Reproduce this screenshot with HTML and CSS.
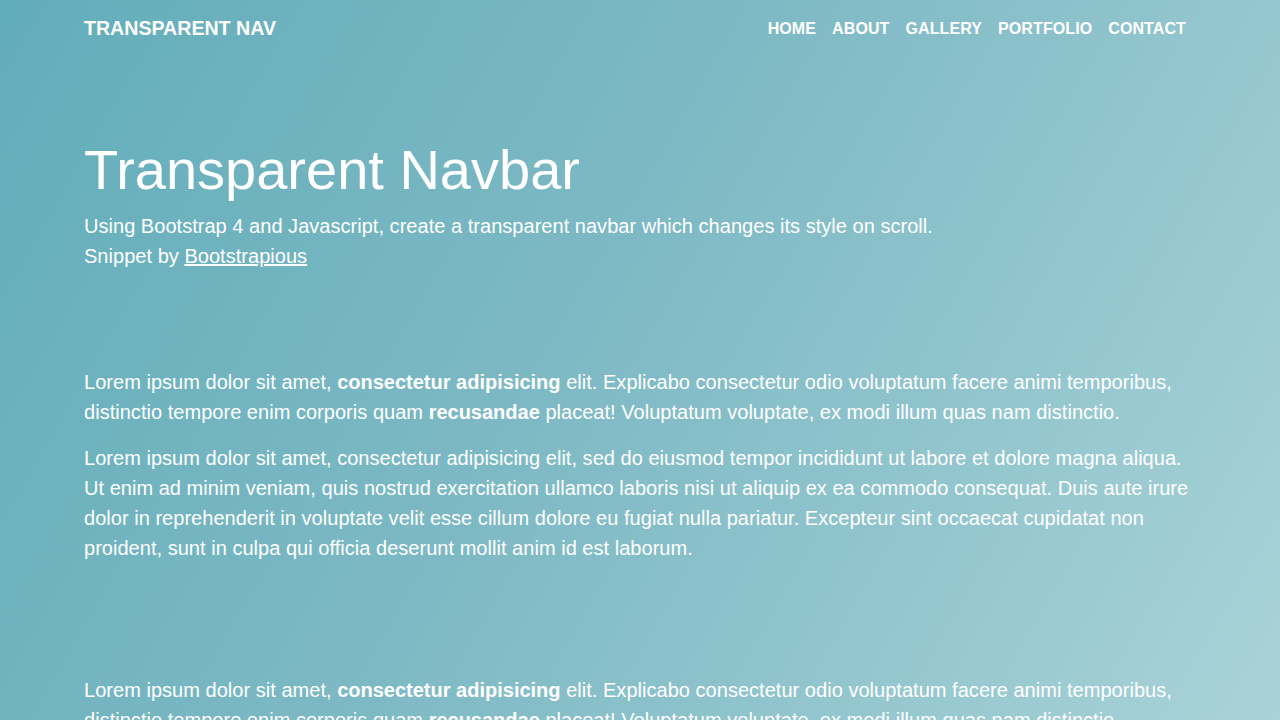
FILE: index.html
```html
<!DOCTYPE html>
<html lang="en">
<head>
<meta charset="utf-8">
<title>Transparent Navbar</title>
<link rel="stylesheet" href="styles.css">
</head>
<body>
<nav class="navbar">
  <div class="container nav-inner">
    <a class="brand" href="#">Transparent Nav</a>
    <ul class="nav-links">
      <li><a href="#">Home</a></li>
      <li><a href="#">About</a></li>
      <li><a href="#">Gallery</a></li>
      <li><a href="#">Portfolio</a></li>
      <li><a href="#">Contact</a></li>
    </ul>
  </div>
</nav>
<main class="container page">
  <header class="hero">
    <h1 class="display">Transparent Navbar</h1>
    <p class="lead">Using Bootstrap 4 and Javascript, create a transparent navbar which changes its style on scroll.</p>
    <p class="lead last">Snippet by <a class="ulink" href="#">Bootstrapious</a></p>
  </header>
  <section class="section">
    <p class="lead">Lorem ipsum dolor sit amet, <strong>consectetur adipisicing</strong> elit. Explicabo consectetur odio voluptatum facere animi temporibus, distinctio tempore enim corporis quam <strong>recusandae</strong> placeat! Voluptatum voluptate, ex modi illum quas nam distinctio.</p>
    <p class="lead">Lorem ipsum dolor sit amet, consectetur adipisicing elit, sed do eiusmod tempor incididunt ut labore et dolore magna aliqua. Ut enim ad minim veniam, quis nostrud exercitation ullamco laboris nisi ut aliquip ex ea commodo consequat. Duis aute irure dolor in reprehenderit in voluptate velit esse cillum dolore eu fugiat nulla pariatur. Excepteur sint occaecat cupidatat non proident, sunt in culpa qui officia deserunt mollit anim id est laborum.</p>
  </section>
  <section class="section">
    <p class="lead">Lorem ipsum dolor sit amet, <strong>consectetur adipisicing</strong> elit. Explicabo consectetur odio voluptatum facere animi temporibus, distinctio tempore enim corporis quam <strong>recusandae</strong> placeat! Voluptatum voluptate, ex modi illum quas nam distinctio.</p>
    <p class="lead">Lorem ipsum dolor sit amet, consectetur adipisicing elit, sed do eiusmod tempor incididunt ut labore et dolore magna aliqua. Ut enim ad minim veniam, quis nostrud exercitation ullamco laboris nisi ut aliquip ex ea commodo consequat.</p>
  </section>
</main>
</body>
</html>
```
FILE: styles.css
```css
* { box-sizing: border-box; }
html, body { margin: 0; padding: 0; }
body {
  font-family: "Liberation Sans", Arial, sans-serif;
  color: #fff;
  background: linear-gradient(120deg, #62adba 0%, #7db9c4 45%, #a9d2d8 100%);
  background-attachment: fixed;
  min-height: 100vh;
}
.container {
  width: 1140px;
  margin: 0 auto;
  padding: 0 16px 0 14px;
}
.navbar { height: 56px; }
.nav-inner {
  height: 100%;
  display: flex;
  align-items: center;
  justify-content: space-between;
}
.brand {
  color: #fff;
  text-decoration: none;
  text-transform: uppercase;
  font-weight: 700;
  font-size: 19.6px;
  line-height: 1;
  padding-top: 2px;
}
.nav-links {
  list-style: none;
  margin: 0;
  padding: 0;
  display: flex;
}
.nav-links a {
  display: block;
  padding: 2px 8px 0;
  color: #fff;
  text-decoration: none;
  text-transform: uppercase;
  font-weight: 700;
  font-size: 16px;
  letter-spacing: 0.1px;
  line-height: 1;
}
.hero { padding: 80px 0 48px; }
.display {
  font-size: 56px;
  font-weight: 300;
  line-height: 1.2;
  margin: 0 0 8px;
}
.lead {
  font-size: 20px;
  font-weight: 300;
  line-height: 1.5;
  letter-spacing: 0.03px;
  margin: 0 0 16px;
}
.lead strong { font-weight: 700; letter-spacing: 0; }
.hero .lead { margin: 0; }
.ulink { color: #fff; text-decoration: underline; }
.section { padding: 48px 0; }
```
